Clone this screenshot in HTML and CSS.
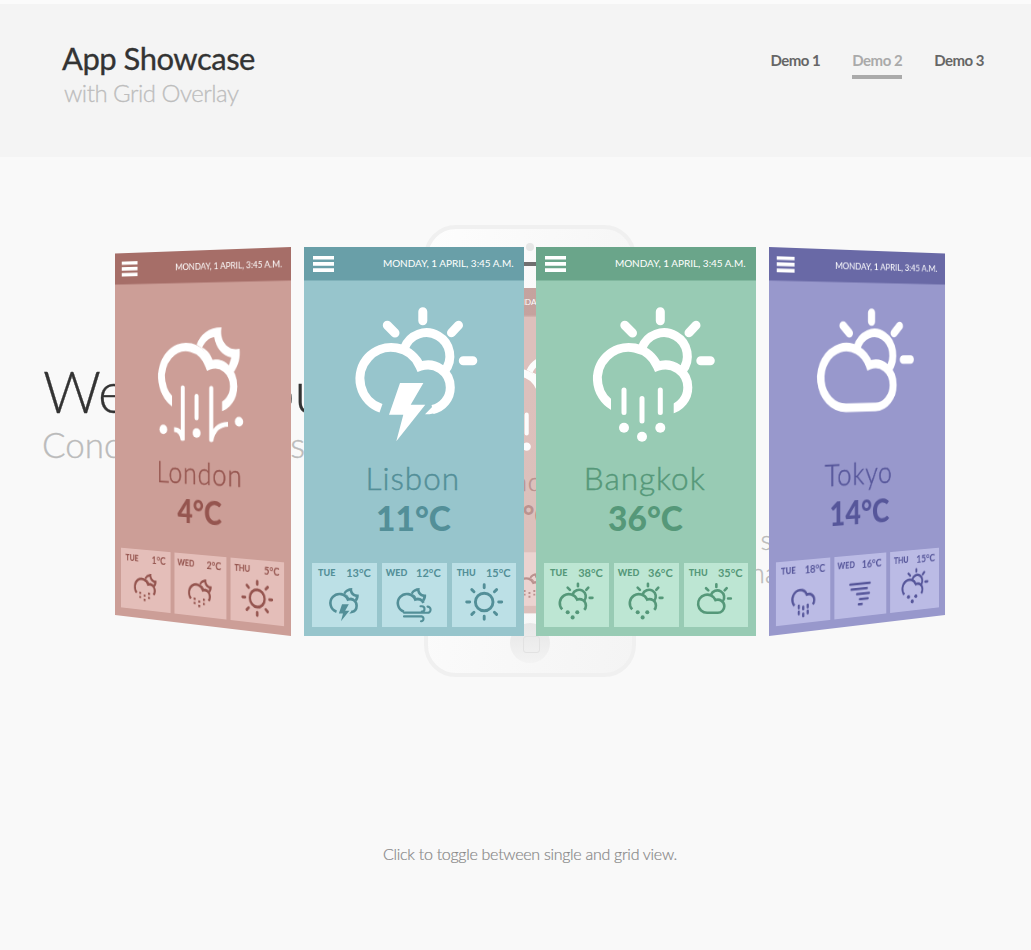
FILE: index.html
```
<!DOCTYPE html>
<html lang="en">
<head>
<meta charset="utf-8">
<title>App Showcase with Grid Overlay</title>
<link rel="stylesheet" href="styles.css">
</head>
<body>
<svg class="defs" width="0" height="0" aria-hidden="true">
  <defs>
    <clipPath id="rain-gap"><path d="M0 0H220V220H137.700V150H75V220H0Z"/></clipPath>
    <g id="menu"><path d="M0 0h21.5v3.5H0zM0 6h21.5v3.8H0zM0 12.2h21.5v3.8H0z"/></g>
    <g id="sun-behind" fill="none" stroke="currentColor" stroke-width="9">
      <path d="M106 101A23.4 23.4 0 1 1 146 124"/>
      <path stroke-linecap="round" d="M124.3 64.8v9M88.8 78.3l7.7 7.7M160 78.3l-7 7.5M164.8 113.7h9.5"/>
    </g>
    <path id="moon" fill="currentColor" fill-rule="evenodd" d="M106 98C111 87 121 80 137 80C134 93 144 105 159 102C160 111 158 118 152 126C145 117 134 114 124 116C119 106 113 101 106 98ZM113 101C116 95 121 91 128 90C130 101 138 109 149 111C148 114 147 116 146 119C140 114 134 112 126 114C123 107 119 103 113 101Z"/>
    <path id="cloud" fill="none" stroke="currentColor" stroke-width="9" d="M92.2 163A31.300 31.300 0 1 1 121.500 119.400A22.500 22.500 0 0 1 151.800 140.500A22.500 22.500 0 0 1 129.300 163Z"/>
    <g id="cloud-open" fill="none" stroke="currentColor" stroke-width="9" clip-path="url(#rain-gap)">
      <path d="M80 160.300A31.300 31.300 0 1 1 121.500 119.400A22.500 22.500 0 0 1 151.800 140.500A22.500 22.500 0 0 1 134 162.500"/>
    </g>
    <path id="cloud-wide" fill="none" stroke="currentColor" stroke-width="9" d="M70 153.500A31.300 31.300 0 1 1 121.500 119.400A22.500 22.500 0 0 1 151.800 140.500A22.500 22.500 0 0 1 146 155.500"/>
    <g id="cloud-bolt">
      <path fill="none" stroke="currentColor" stroke-width="9" d="M82.500 161.300A31.300 31.300 0 1 1 121.500 119.400A22.500 22.500 0 0 1 151.800 140.500A22.500 22.500 0 0 1 134 162.500"/>
      <path fill="currentColor" d="M101.500 136h23.400l-12.700 21.700h14.600L97.800 194.300l7-26.600H90.500ZM136 157.500L126.500 167.300H131L137 166Z"/>
    </g>
    <g id="rain">
      <path fill="none" stroke="currentColor" stroke-width="5" stroke-linecap="round" d="M88 143v22.500M106 151.500v22.500M124.300 143v22.500"/>
      <g fill="currentColor"><circle cx="88" cy="180.700" r="5"/><circle cx="106" cy="189.700" r="5"/><circle cx="124.300" cy="180.700" r="5"/></g>
    </g>
    <g id="splash">
      <path fill="none" stroke="currentColor" stroke-width="5" stroke-linecap="round" d="M88.500 143V196M106 151.500v22.500M124.300 143V196"/>
      <path fill="none" stroke="currentColor" stroke-width="5" d="M77.500 187Q87 187 88.500 198M145 179.500Q128 180 124.300 197"/>
      <g fill="currentColor"><circle cx="63.700" cy="187.200" r="5"/><circle cx="106" cy="189.700" r="5"/><circle cx="158.300" cy="176.500" r="5"/></g>
    </g>
    <g id="t-sun-rain" transform="translate(-2.100 1.900) scale(.29)">
      <use href="#sun-behind"/><use href="#cloud-wide"/>
      <g fill="currentColor"><circle cx="89" cy="163" r="7"/><circle cx="122" cy="163" r="7"/><circle cx="106" cy="181" r="7"/></g>
    </g>
    <g id="t-moon-snow" transform="translate(.6 1.900) scale(.29)">
      <use href="#moon"/><use href="#cloud-wide"/>
      <path fill="none" stroke="currentColor" stroke-width="8" d="M82 153h8M82 168h8M102 161h8M102 177h8M122 153h8M122 168h8"/>
    </g>
    <g id="t-moon-bolt" transform="translate(.6 1.900) scale(.29)"><use href="#moon"/><use href="#cloud-bolt"/></g>
    <g id="t-wind">
      <g transform="translate(-2 1.900) scale(.29)"><use href="#moon"/><path fill="none" stroke="currentColor" stroke-width="9" d="M82.500 161.300A31.300 31.300 0 1 1 121.500 119.400A22.500 22.500 0 0 1 150 131"/></g>
      <path fill="none" stroke="currentColor" stroke-width="2.100" stroke-linecap="round" d="M22 49.600H39.300M38.500 43.200h1.300a2.700 2.700 0 0 1 0 5.400M22 49.800H45.500a3 3 0 0 0 0-6.200M22 53.400H39.500a2.500 2.500 0 0 1 0 4.900h-.5"/>
    </g>
    <g id="t-sun" fill="none" stroke="currentColor" stroke-width="2.900" stroke-linecap="round">
      <circle cx="32.200" cy="39" r="8.800"/>
      <path d="M32.200 21.700v3M32.200 53.300v3M14.700 39h3M46.700 39h3M19.800 26.600l2.200 2.200M42.400 49.200l2.200 2.200M19.800 51.400l2.200-2.200M42.400 28.800l2.200-2.200"/>
    </g>
    <g id="t-sun-cloud" transform="translate(-3.700 2.500) scale(.29)"><use href="#sun-behind"/><use href="#cloud"/></g>
    <g id="t-rain">
      <g transform="translate(1.500 1) scale(.29)"><use href="#cloud-wide"/></g>
      <path fill="none" stroke="currentColor" stroke-width="2.500" stroke-linecap="round" d="M27 46v2.500M27 52v2.500M32.300 47.500v2.500M32.300 54.500v2.500M37.700 46v2.500M37.700 52v2.500"/>
    </g>
    <path id="t-tornado" fill="none" stroke="currentColor" stroke-width="2.500" stroke-linecap="round" d="M19.500 30H44M21 35.300H40.500M28 40.600H43M31.500 45.900H41.500M30 51.200H34"/>
  </defs>
</svg>

<header class="page-header">
  <h1 class="title">App Showcase<span class="subtitle">with Grid Overlay</span></h1>
  <nav class="demos">
    <a class="demo">Demo 1</a>
    <a class="demo current">Demo 2</a>
    <a class="demo">Demo 3</a>
  </nav>
</header>

<main class="stage">
  <section class="intro">
    <h2 class="intro-title">We<span class="intro-you">you</span></h2>
    <p class="intro-sub">Concept<span class="intro-apps">apps</span></p>
  </section>
  <p class="note"><span class="note-start">s</span><span class="note-end">na</span></p>

  <div class="phone">
    <i class="camera"></i><i class="speaker"></i>
    <div class="screen">
      <article class="card london">
        <div class="bar"><svg class="menu" viewBox="0 0 21.500 16"><use href="#menu"/></svg><span class="date">MONDAY, 1 APRIL, 3:45 A.M.</span></div>
        <svg class="hero" viewBox="0 34 220 178"><use href="#moon"/><use href="#cloud-open"/><use href="#splash"/></svg>
        <h3 class="city">London</h3><p class="temp">4°C</p>
        <div class="days"><div class="day"></div><div class="day"><svg class="tile tile-only" viewBox="0 16 64.500 48.500"><use href="#t-moon-snow"/></svg></div><div class="day"></div></div>
      </article>
    </div>
    <i class="home"></i>
  </div>

  <div class="grid">
    <div class="slot narrow">
      <article class="card london turn-left">
        <div class="bar"><svg class="menu" viewBox="0 0 21.500 16"><use href="#menu"/></svg><span class="date">MONDAY, 1 APRIL, 3:45 A.M.</span></div>
        <svg class="hero" viewBox="0 34 220 178"><use href="#moon"/><use href="#cloud-open"/><use href="#splash"/></svg>
        <h3 class="city">London</h3><p class="temp">4°C</p>
        <div class="days">
          <div class="day"><p class="line"><b>TUE</b><span>1°C</span></p><svg class="tile" viewBox="0 16 64.500 48.500"><use href="#t-moon-snow"/></svg></div>
          <div class="day"><p class="line"><b>WED</b><span>2°C</span></p><svg class="tile" viewBox="0 16 64.500 48.500"><use href="#t-moon-snow"/></svg></div>
          <div class="day"><p class="line"><b>THU</b><span>5°C</span></p><svg class="tile" viewBox="0 16 64.500 48.500"><use href="#t-sun"/></svg></div>
        </div>
      </article>
    </div>
    <div class="slot">
      <article class="card lisbon">
        <div class="bar"><svg class="menu" viewBox="0 0 21.500 16"><use href="#menu"/></svg><span class="date">MONDAY, 1 APRIL, 3:45 A.M.</span></div>
        <svg class="hero" viewBox="5.500 34 220 178"><use href="#sun-behind"/><use href="#cloud-bolt"/></svg>
        <h3 class="city">Lisbon</h3><p class="temp">11°C</p>
        <div class="days">
          <div class="day"><p class="line"><b>TUE</b><span>13°C</span></p><svg class="tile" viewBox="0 16 64.500 48.500"><use href="#t-moon-bolt"/></svg></div>
          <div class="day"><p class="line"><b>WED</b><span>12°C</span></p><svg class="tile" viewBox="0 16 64.500 48.500"><use href="#t-wind"/></svg></div>
          <div class="day"><p class="line"><b>THU</b><span>15°C</span></p><svg class="tile" viewBox="0 16 64.500 48.500"><use href="#t-sun"/></svg></div>
        </div>
      </article>
    </div>
    <div class="slot">
      <article class="card bangkok">
        <div class="bar"><svg class="menu" viewBox="0 0 21.500 16"><use href="#menu"/></svg><span class="date">MONDAY, 1 APRIL, 3:45 A.M.</span></div>
        <svg class="hero" viewBox="0 34 220 178"><use href="#sun-behind"/><use href="#cloud-open"/><use href="#rain"/></svg>
        <h3 class="city">Bangkok</h3><p class="temp">36°C</p>
        <div class="days">
          <div class="day"><p class="line"><b>TUE</b><span>38°C</span></p><svg class="tile" viewBox="0 16 64.500 48.500"><use href="#t-sun-rain"/></svg></div>
          <div class="day"><p class="line"><b>WED</b><span>36°C</span></p><svg class="tile" viewBox="0 16 64.500 48.500"><use href="#t-sun-rain"/></svg></div>
          <div class="day"><p class="line"><b>THU</b><span>35°C</span></p><svg class="tile" viewBox="0 16 64.500 48.500"><use href="#t-sun-cloud"/></svg></div>
        </div>
      </article>
    </div>
    <div class="slot narrow">
      <article class="card tokyo turn-right">
        <div class="bar"><svg class="menu" viewBox="0 0 21.500 16"><use href="#menu"/></svg><span class="date">MONDAY, 1 APRIL, 3:45 A.M.</span></div>
        <svg class="hero" viewBox="0 34 220 178"><use href="#sun-behind"/><use href="#cloud"/></svg>
        <h3 class="city">Tokyo</h3><p class="temp">14°C</p>
        <div class="days">
          <div class="day"><p class="line"><b>TUE</b><span>18°C</span></p><svg class="tile" viewBox="0 16 64.500 48.500"><use href="#t-rain"/></svg></div>
          <div class="day"><p class="line"><b>WED</b><span>16°C</span></p><svg class="tile" viewBox="0 16 64.500 48.500"><use href="#t-tornado"/></svg></div>
          <div class="day"><p class="line"><b>THU</b><span>15°C</span></p><svg class="tile" viewBox="0 16 64.500 48.500"><use href="#t-sun-rain"/></svg></div>
        </div>
      </article>
    </div>
  </div>
</main>
<p class="hint">Click to toggle between single and grid view.</p>
</body>
</html>
```
FILE: styles.css
```
* { box-sizing: border-box; }
body {
  margin: 0;
  height: 950px;
  overflow: hidden;
  border-top: 4px solid #fbfbfb;
  background: #f9f9f9;
  font-family: Lato, "Liberation Sans", sans-serif;
  color: #333;
}
h1, h2, h3, p { margin: 0; font-weight: 400; }
.defs { position: absolute; }

.page-header {
  display: flex;
  justify-content: space-between;
  height: 153px;
  padding: 35px 47px 0 62px;
  background: #f4f4f4;
}
.title { font-size: 31px; line-height: 38px; letter-spacing: -.5px; -webkit-text-stroke: .3px; }
.subtitle {
  display: block;
  padding-left: 2px;
  margin-top: 1px;
  font-size: 24px;
  line-height: 30px;
  letter-spacing: -.5px;
  font-weight: 300;
  color: #bdbdbd;
}
.demos { display: flex; gap: 32px; height: 40px; padding-top: 11px; }
.demo { height: 29px; font-size: 15px; line-height: 20px; font-weight: 700; letter-spacing: -.5px; color: #666; }
.demo.current { color: #aaa; border-bottom: 4px solid #aaa; }

.stage { position: relative; height: 660px; padding-top: 90px; }
.intro { position: absolute; left: 43px; top: 198px; }
.intro-title { display: flex; font-size: 57px; line-height: 72px; font-weight: 300; -webkit-text-stroke: .3px; }
.intro-you { margin-left: 107px; }
.intro-sub { display: flex; margin: -4px 0 0 -1px; font-size: 35px; line-height: 42px; font-weight: 300; color: #bbb; -webkit-text-stroke: .35px; }
.intro-apps { margin-left: 65px; }
.note {
  position: absolute;
  left: 736px;
  top: 366px;
  width: 38px;
  display: flex;
  flex-direction: column;
  align-items: flex-end;
  font-size: 27px;
  line-height: 33px;
  font-weight: 300;
  color: #bbb;
  -webkit-text-stroke: .3px;
}
.note-start { margin-right: 2px; }
.note-end { margin-right: -4px; }

/* Faded handset behind the overlay grid */
.phone {
  position: absolute;
  left: 424px;
  top: 68px;
  width: 212px;
  height: 452px;
  border: 4px solid #f0f0f0;
  border-radius: 32px;
  background: linear-gradient(100deg, #fdfdfd, #f4f4f4);
  display: flex;
  flex-direction: column;
  align-items: center;
}
.camera { width: 8px; height: 8px; margin-top: 14px; border-radius: 50%; background: #e6e6e6; }
.speaker { width: 40px; height: 4px; margin-top: 11px; border-radius: 2px; background: #707070; }
.screen { width: 184px; height: 325px; margin-top: 22px; opacity: .62; }
.screen .card { transform: scale(.8364); transform-origin: 0 0; }
.home {
  width: 40px;
  height: 40px;
  margin-top: 10px;
  padding: 13px;
  border-radius: 50%;
  background: linear-gradient(#e6e6e6, #f3f3f3);
}
.home::before { content: ""; display: block; width: 15px; height: 15px; border: 1px solid #e2e2e2; border-radius: 3px; }

.grid { position: relative; display: flex; gap: 12px; padding-left: 115px; }
.slot { width: 220px; height: 389px; flex: none; }
.slot.narrow { width: 176px; }
.slot.narrow:first-child { margin-right: 1px; }
.slot.narrow:last-child { margin-left: 1px; }

.card { width: 220px; height: 389px; background: var(--bg); color: var(--ink); overflow: hidden; }
.london { --bg: #cc9e97; --bar: #a66e68; --ink: #95554f; --tile: #e4beb9; }
.lisbon { --bg: #97c5cc; --bar: #699fa8; --ink: #538f98; --tile: #bce0e6; }
.bangkok { --bg: #98cbb4; --bar: #6aa58a; --ink: #559879; --tile: #bde6d3; }
.tokyo { --bg: #9898cc; --bar: #6969a6; --ink: #56569a; --tile: #bbbbe5; }
.turn-left { transform-origin: 0 0; transform: matrix3d(.74344, -.029545, 0, -.0003214, 0, .9293, 0, 0, 0, 0, 1, 0, 0, 6.5, 0, 1); }
.turn-right { transform-origin: 0 0; transform: matrix3d(.86088, .031795, 0, .0003458, 0, 1, 0, 0, 0, 0, 1, 0, 0, 0, 0, 1); }

.bar {
  display: flex;
  justify-content: space-between;
  height: 34px;
  padding: 9px 10.5px 0 8.7px;
  border-bottom: 1px solid color-mix(in srgb, var(--bar), var(--bg));
  background: var(--bar);
  color: #fff;
}
.menu { width: 21.5px; height: 16px; fill: #fff; }
.date { font-size: 10px; line-height: 14px; letter-spacing: -.03px; white-space: nowrap; }
.hero { display: block; width: 220px; height: 178px; color: #fff; }
.city { height: 40px; padding-right: 2.5px; font-size: 31.5px; line-height: 39px; letter-spacing: 1px; font-weight: 300; text-align: center; -webkit-text-stroke: .45px; }
.temp { height: 38px; padding-right: 1px; font-size: 33.5px; line-height: 38px; font-weight: 900; text-align: center; }
.days { display: flex; gap: 5px; padding: 25.5px 7.5px 0 8px; }
.day { flex: 1; height: 64.5px; background: var(--tile); }
.line { display: flex; justify-content: space-between; height: 16px; padding: 4px 6px 0; line-height: 12px; font-size: 11px; font-weight: 700; }
.line b { font-size: 9px; }
.day:nth-child(2) b { margin-left: -2px; }
.day:nth-child(3) b { margin-left: -1px; }
.tile { display: block; width: 64.5px; height: 48.5px; }
.tile-only { margin-top: 16px; }

.hint { margin-top: 25px; padding-left: 29px; font-size: 16px; line-height: 24px; font-weight: 300; letter-spacing: -.28px; color: #888; text-align: center; -webkit-text-stroke: .2px; }
```
